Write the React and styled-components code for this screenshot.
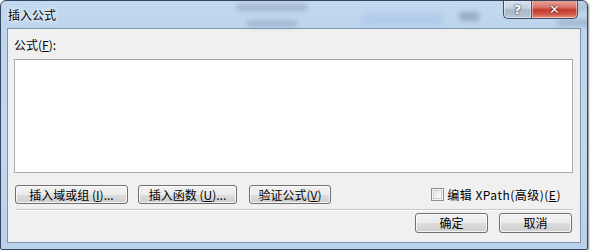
import React from "react";
import styled, { createGlobalStyle } from "styled-components";

const Global = createGlobalStyle`
  html, body { margin: 0; padding: 0; background: #ffffff; }
  body { font-family: "Noto Sans CJK SC", "Noto Sans", sans-serif; font-size: 12px; color: #000; }
`;

const Window = styled.div`
  position: relative;
  box-sizing: border-box;
  width: 588px;
  height: 250px;
  border: 1px solid #34465f;
  border-radius: 6px 6px 2px 2px;
  background: linear-gradient(180deg, #c3d9ef 0%, #bcd4ed 12%, #c2d8ee 60%, #b9d1ea 100%);
  box-shadow: 1px 1px 2px rgba(0, 0, 0, 0.45);
  display: flex;
  flex-direction: column;
  padding: 0 6px 6px 6px;
  overflow: hidden;
`;

const TitleBar = styled.div`
  position: relative;
  height: 27px;
  display: flex;
  align-items: flex-start;
  justify-content: space-between;
`;

const Blob = styled.span`
  position: absolute;
  border-radius: 3px;
  filter: blur(2.5px);
  background: ${(p) => p.$c};
  opacity: ${(p) => p.$o};
`;

const TitleText = styled.div`
  position: relative;
  margin-top: 7px;
  margin-left: 1px;
  line-height: 14px;
  font-size: 12px;
  color: #000;
  text-shadow: 0 0 6px #ffffff, 0 0 3px #ffffff;
`;

const Controls = styled.div`
  position: relative;
  display: flex;
  margin-top: -1px;
  margin-right: 3px;
`;

const CaptionButton = styled.div`
  box-sizing: border-box;
  width: ${(p) => p.$w}px;
  height: 19px;
  border: 1px solid #3f5069;
  border-top: none;
  display: flex;
  align-items: center;
  justify-content: center;
  font-family: "DejaVu Sans", sans-serif;
  font-weight: bold;
  color: #ffffff;
  box-shadow: inset 0 0 0 1px rgba(255, 255, 255, 0.45);
`;

const HelpButton = styled(CaptionButton)`
  border-radius: 0 0 0 5px;
  border-right: none;
  background: linear-gradient(180deg, #dfe6ef 0%, #c5d0dd 45%, #a9b8ca 55%, #b9c6d6 100%);
  font-size: 13px;
  text-shadow: 0 0 2px #20304a, 0 0 1px #20304a;
`;

const CloseButton = styled(CaptionButton)`
  border-radius: 0 0 5px 0;
  background: linear-gradient(180deg, #eaa99c 0%, #d9786a 40%, #c33a2a 55%, #d25a48 80%, #e89484 100%);
  font-size: 13px;
  text-shadow: 0 0 2px #3a0a05, 0 0 1px #3a0a05;
`;

const Content = styled.div`
  box-sizing: border-box;
  flex: 1;
  border: 1px solid #7f93ad;
  background: #f0f0f0;
  padding: 9px 7px 0 6px;
  display: flex;
  flex-direction: column;
`;

const Label = styled.div`
  line-height: 14px;
  height: 14px;
`;

const TextBox = styled.div`
  box-sizing: border-box;
  margin-top: 7px;
  height: 114px;
  background: #ffffff;
  border: 1px solid #abadb3;
  border-top-color: #a0a0a0;
`;

const ButtonRow = styled.div`
  display: flex;
  align-items: center;
  margin-top: 12px;
  padding-left: 1px;
`;

const Button = styled.button`
  box-sizing: border-box;
  width: ${(p) => p.$w}px;
  height: ${(p) => p.$h || 19}px;
  margin-right: ${(p) => p.$mr || 0}px;
  padding: 0;
  border: 1px solid #707070;
  border-radius: 3px;
  background: linear-gradient(180deg, #f2f2f2 0%, #ebebeb 50%, #dddddd 51%, #cfcfcf 100%);
  box-shadow: inset 0 0 0 1px rgba(255, 255, 255, 0.75);
  font-family: "Noto Sans CJK SC", "Noto Sans", sans-serif;
  font-size: 12px;
  line-height: 14px;
  color: #000;
  white-space: pre;
  display: flex;
  align-items: center;
  justify-content: center;
`;

const CheckWrap = styled.label`
  margin-left: auto;
  margin-right: 12px;
  display: flex;
  align-items: center;
  line-height: 14px;
  white-space: pre;
  letter-spacing: 0.5px;
`;

const CheckBox = styled.span`
  box-sizing: border-box;
  width: 13px;
  height: 13px;
  margin-right: 3px;
  border: 1px solid #8e8f8f;
  background: linear-gradient(135deg, #dcdcdc 0%, #f4f4f4 60%, #ffffff 100%);
  box-shadow: inset 0 0 0 1px #f4f4f4, inset 0 0 0 2px #d0d0d0;
`;

const Separator = styled.div`
  margin-top: 5px;
  margin-left: 1px;
  height: 1px;
  background: #c8c8c8;
  border-bottom: 1px solid #ffffff;
`;

const FooterRow = styled.div`
  display: flex;
  justify-content: flex-end;
  margin-top: 2px;
  padding-right: 1px;
`;

export default function App() {
  return (
    <>
      <Global />
      <Window>
        <TitleBar>
          <Blob style={{ left: 230, top: 3, width: 70, height: 7 }} $c="#7d8ea6" $o={0.45} />
          <Blob style={{ left: 240, top: 19, width: 50, height: 7 }} $c="#7d8ea6" $o={0.4} />
          <Blob style={{ left: 540, top: 3, width: 90, height: 6 }} $c="#8797ad" $o={0.4} />
          <Blob style={{ left: 550, top: 18, width: 60, height: 7 }} $c="#7b8ca4" $o={0.4} />
          <Blob style={{ left: 355, top: 12, width: 80, height: 12 }} $c="#a7c6e8" $o={0.6} />
          <Blob style={{ left: 452, top: 11, width: 20, height: 9 }} $c="#5c6f8c" $o={0.4} />
          <TitleText>插入公式</TitleText>
          <Controls>
            <HelpButton $w={28}>?</HelpButton>
            <CloseButton $w={47}>✕</CloseButton>
          </Controls>
        </TitleBar>
        <Content>
          <Label>
            公式(<u>F</u>):
          </Label>
          <TextBox />
          <ButtonRow>
            <Button $w={113} $mr={10}>
              插入域或组 (<u>I</u>)...
            </Button>
            <Button $w={99} $mr={12}>
              插入函数 (<u>U</u>)...
            </Button>
            <Button $w={82}>
              验证公式(<u>V</u>)
            </Button>
            <CheckWrap>
              <CheckBox />
              编辑 XPath(高级)(<u>E</u>)
            </CheckWrap>
          </ButtonRow>
          <Separator />
          <FooterRow>
            <Button $w={73} $h={20} $mr={11}>
              确定
            </Button>
            <Button $w={73} $h={20}>
              取消
            </Button>
          </FooterRow>
        </Content>
      </Window>
    </>
  );
}
